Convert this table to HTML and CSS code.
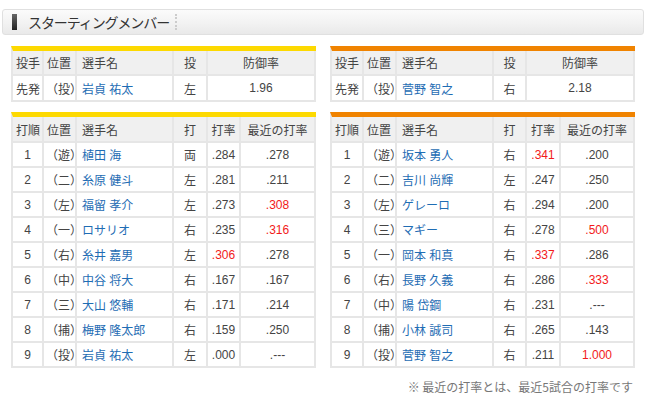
FILE: index.html
```html
<!DOCTYPE html>
<html lang="ja">
<head>
<meta charset="utf-8">
<link rel="stylesheet" href="styles.css">
</head>
<body>
<div class="title-box">
  <span class="title-mark"></span>
  <h2 class="title">スターティングメンバー</h2>
  <span class="title-sep"></span>
</div>
<div class="teams">
  <div class="team team-home">
    <table class="tbl pit">
      <colgroup><col class="c1"><col class="c2"><col class="c3"><col class="c4"><col class="c5w"></colgroup>
      <thead><tr><th class="l">投手</th><th class="l">位置</th><th class="l nm">選手名</th><th>投</th><th>防御率</th></tr></thead>
      <tbody><tr><td class="l">先発</td><td class="l pos">（投）</td><td class="l nm"><a>岩貞 祐太</a></td><td>左</td><td class="num">1.96</td></tr></tbody>
    </table>
    <table class="tbl bat">
      <colgroup><col class="c1"><col class="c2"><col class="c3"><col class="c4"><col class="c5"><col class="c6"></colgroup>
      <thead><tr><th class="l">打順</th><th class="l">位置</th><th class="l nm">選手名</th><th>打</th><th>打率</th><th>最近の打率</th></tr></thead>
      <tbody>
        <tr><td class="num">1</td><td class="l pos">（遊）</td><td class="l nm"><a>植田 海</a></td><td>両</td><td class="num">.284</td><td class="num">.278</td></tr>
        <tr><td class="num">2</td><td class="l pos">（二）</td><td class="l nm"><a>糸原 健斗</a></td><td>左</td><td class="num">.281</td><td class="num">.211</td></tr>
        <tr><td class="num">3</td><td class="l pos">（左）</td><td class="l nm"><a>福留 孝介</a></td><td>左</td><td class="num">.273</td><td class="num red">.308</td></tr>
        <tr><td class="num">4</td><td class="l pos">（一）</td><td class="l nm"><a>ロサリオ</a></td><td>右</td><td class="num">.235</td><td class="num red">.316</td></tr>
        <tr><td class="num">5</td><td class="l pos">（右）</td><td class="l nm"><a>糸井 嘉男</a></td><td>左</td><td class="num red">.306</td><td class="num">.278</td></tr>
        <tr><td class="num">6</td><td class="l pos">（中）</td><td class="l nm"><a>中谷 将大</a></td><td>右</td><td class="num">.167</td><td class="num">.167</td></tr>
        <tr><td class="num">7</td><td class="l pos">（三）</td><td class="l nm"><a>大山 悠輔</a></td><td>右</td><td class="num">.171</td><td class="num">.214</td></tr>
        <tr><td class="num">8</td><td class="l pos">（捕）</td><td class="l nm"><a>梅野 隆太郎</a></td><td>右</td><td class="num">.159</td><td class="num">.250</td></tr>
        <tr><td class="num">9</td><td class="l pos">（投）</td><td class="l nm"><a>岩貞 祐太</a></td><td>左</td><td class="num">.000</td><td class="num">.---</td></tr>
      </tbody>
    </table>
  </div>
  <div class="team team-away">
    <table class="tbl pit">
      <colgroup><col class="c1"><col class="c2"><col class="c3"><col class="c4"><col class="c5w"></colgroup>
      <thead><tr><th class="l">投手</th><th class="l">位置</th><th class="l nm">選手名</th><th>投</th><th>防御率</th></tr></thead>
      <tbody><tr><td class="l">先発</td><td class="l pos">（投）</td><td class="l nm"><a>菅野 智之</a></td><td>右</td><td class="num">2.18</td></tr></tbody>
    </table>
    <table class="tbl bat">
      <colgroup><col class="c1"><col class="c2"><col class="c3"><col class="c4"><col class="c5"><col class="c6"></colgroup>
      <thead><tr><th class="l">打順</th><th class="l">位置</th><th class="l nm">選手名</th><th>打</th><th>打率</th><th>最近の打率</th></tr></thead>
      <tbody>
        <tr><td class="num">1</td><td class="l pos">（遊）</td><td class="l nm"><a>坂本 勇人</a></td><td>右</td><td class="num red">.341</td><td class="num">.200</td></tr>
        <tr><td class="num">2</td><td class="l pos">（二）</td><td class="l nm"><a>吉川 尚輝</a></td><td>左</td><td class="num">.247</td><td class="num">.250</td></tr>
        <tr><td class="num">3</td><td class="l pos">（左）</td><td class="l nm"><a>ゲレーロ</a></td><td>右</td><td class="num">.294</td><td class="num">.200</td></tr>
        <tr><td class="num">4</td><td class="l pos">（三）</td><td class="l nm"><a>マギー</a></td><td>右</td><td class="num">.278</td><td class="num red">.500</td></tr>
        <tr><td class="num">5</td><td class="l pos">（一）</td><td class="l nm"><a>岡本 和真</a></td><td>右</td><td class="num red">.337</td><td class="num">.286</td></tr>
        <tr><td class="num">6</td><td class="l pos">（右）</td><td class="l nm"><a>長野 久義</a></td><td>右</td><td class="num">.286</td><td class="num red">.333</td></tr>
        <tr><td class="num">7</td><td class="l pos">（中）</td><td class="l nm"><a>陽 岱鋼</a></td><td>右</td><td class="num">.231</td><td class="num">.---</td></tr>
        <tr><td class="num">8</td><td class="l pos">（捕）</td><td class="l nm"><a>小林 誠司</a></td><td>右</td><td class="num">.265</td><td class="num">.143</td></tr>
        <tr><td class="num">9</td><td class="l pos">（投）</td><td class="l nm"><a>菅野 智之</a></td><td>右</td><td class="num">.211</td><td class="num red">1.000</td></tr>
      </tbody>
    </table>
    <p class="note">※ 最近の打率とは、最近5試合の打率です</p>
  </div>
</div>
</body>
</html>
```

FILE: styles.css
```css
* { box-sizing: border-box; }
html, body { margin: 0; padding: 0; background: #fff; }
body {
  font-family: "Liberation Sans", "Noto Sans CJK JP", sans-serif;
  font-size: 12px;
  color: #444;
  padding: 9px 6px 0 2px;
}
.title-box {
  display: flex;
  align-items: center;
  height: 26px;
  border: 1px solid #e0e0e0;
  border-radius: 3px;
  background: linear-gradient(#fbfbfb, #f2f2f2 55%, #e9e9e9);
  padding-left: 9px;
}
.title-mark {
  width: 5px;
  height: 16px;
  background: linear-gradient(#666, #222);
  margin-right: 11px;
}
.title {
  margin: 0;
  font-family: "Noto Sans CJK JP", sans-serif;
  font-weight: normal;
  font-size: 14px;
  color: #333;
  letter-spacing: -1.1px;
}
.title-sep {
  width: 0;
  height: 16px;
  border-left: 2px dotted #ccc;
  margin-left: 6px;
}
.teams {
  display: flex;
  gap: 14px;
  padding: 11px 0 0 9px;
}
.team { width: 305px; }
.tbl {
  width: 305px;
  table-layout: fixed;
  border-collapse: separate;
  border-spacing: 0;
  border-left: 2px solid #e6e6e6;
  margin-bottom: 10px;
}
.team-home .tbl { border-top: 5px solid #fdd900; }
.team-away .tbl { border-top: 5px solid #f08300; }
.tbl th, .tbl td {
  border-right: 2px solid #e6e6e6;
  border-bottom: 2px solid #e6e6e6;
  padding: 0;
  text-align: center;
  font-weight: normal;
  white-space: nowrap;
  color: #444;
}
.tbl th { background: #f0f0f0; font-size: 12px; }
.pit th { height: 25px; }
.pit td { height: 26px; }
.bat th { height: 26px; }
.bat td { height: 25px; }
.tbl .l { text-align: left; padding-left: 3px; }
.tbl .nm { padding-left: 5px; }
.tbl .pos {
  font-family: "Noto Sans CJK JP", sans-serif;
  text-spacing-trim: space-all;
  padding-left: 2px;
}
.tbl a { color: #1f6db4; text-decoration: none; }
.num { color: #555; font-size: 12px; }
.tbl td.red { color: #f21a1a; }
.c1 { width: 31px; }
.c2 { width: 33px; }
.c3 { width: 97px; }
.c4 { width: 34px; }
.c5 { width: 33px; }
.c6 { width: 75px; }
.c5w { width: 108px; }
.team-away .c1 { width: 32px; }
.team-away .c4 { width: 33px; }
.team-away .c5 { width: 34px; }
.team-away .c6 { width: 74px; }
.note {
  margin: 5px 2px 0 0;
  text-align: right;
  color: #777;
  font-size: 12px;
  font-family: "Noto Sans CJK JP", sans-serif;
}
```
